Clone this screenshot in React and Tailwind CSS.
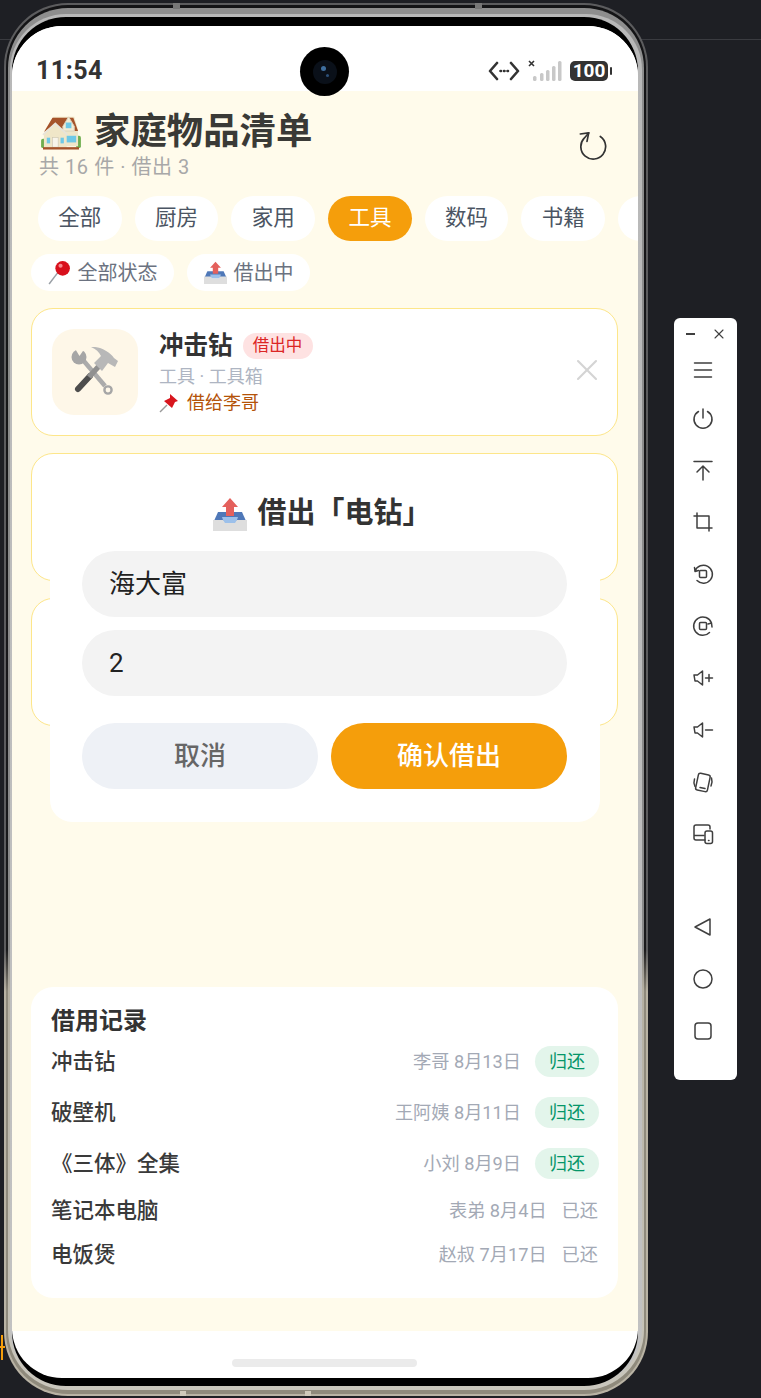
import { X } from "lucide-react";

const tabs = ["全部", "厨房", "家用", "工具", "数码", "书籍", ""];

const records = [
    { name: "冲击钻", meta: "李哥 8月13日", open: true },
    { name: "破壁机", meta: "王阿姨 8月11日", open: true },
    { name: "《三体》全集", meta: "小刘 8月9日", open: true },
    { name: "笔记本电脑", meta: "表弟 8月4日", open: false },
    { name: "电饭煲", meta: "赵叔 7月17日", open: false },
];

const HouseEmoji = ({ className }) => (
    <svg viewBox="0 0 42 38" className={className}>
        <rect x="0" y="26" width="5" height="10" rx="2" fill="#6fae4f" />
        <rect x="37" y="23" width="5" height="13" rx="2" fill="#6fae4f" />
        <path d="M8 12 L13 3 H35 L39 17 V34 H4 V18 Z" fill="#f0e6c8" />
        <path d="M3 19 L12 4 H34 L39 18 H24 L15 10 Z" fill="#a5532a" />
        <path d="M23 13 L29 3 L35 13 V18 H23 Z" fill="#f4ecd4" stroke="#d9d2bd" strokeWidth="1" />
        <rect x="26" y="9" width="6" height="6" fill="#6fc8e6" />
        <path d="M3 21 L15 11 L27 21 V36 H3 Z" fill="#f0e6c8" />
        <path d="M2 22 L15 10 L28 22" fill="none" stroke="#e8e4da" strokeWidth="2" />
        <rect x="12" y="25" width="6" height="10" fill="#f8f4ea" stroke="#c9c3b2" strokeWidth="0.6" />
        <rect x="6" y="25" width="3.5" height="6" fill="#6fc8e6" />
        <rect x="20.5" y="25" width="3.5" height="6" fill="#6fc8e6" />
        <rect x="27" y="23" width="10" height="7" fill="#6fc8e6" />
        <rect x="2" y="35" width="38" height="2.5" fill="#a5532a" />
    </svg>
);

const RoundPinEmoji = ({ className }) => (
    <svg viewBox="0 0 22 24" className={className}>
        <path d="M1 23 L11 10" stroke="#9aa0a6" strokeWidth="1.4" />
        <circle cx="14" cy="8" r="7" fill="#d8101c" />
        <circle cx="12" cy="5.5" r="2" fill="#f78a8f" />
    </svg>
);

const OutboxEmoji = ({ className }) => (
    <svg viewBox="0 0 34 34" className={className}>
        <path d="M5 15 H29 L33 24 H1 Z" fill="#4f78b8" />
        <path d="M9 20 H25 L23 26 H11 Z" fill="#9cc0ea" />
        <path d="M0 23 H10 L12 26 H22 L24 23 H34 V34 H0 Z" fill="#dedede" />
        <path d="M17 1 L25 10 H21 V19 H13 V10 H9 Z" fill="#e4605c" />
    </svg>
);

const ToolsEmoji = ({ className }) => (
    <svg viewBox="0 0 50 50" className={className}>
        {/* wrench */}
        <path d="M13 13 L35 39" stroke="#ababab" strokeWidth="4.500" />
        <circle cx="9" cy="10" r="7.500" fill="#a6a6a6" />
        <path d="M4 0 L9.500 9 L15 1 Z" fill="#fef7e8" />
        <circle cx="38" cy="43" r="3.600" fill="#fef7e8" stroke="#a6a6a6" strokeWidth="2.400" />
        {/* hammer */}
        <path d="M8 42 L20 29" stroke="#4d4d4d" strokeWidth="6" strokeLinecap="round" />
        <path d="M19 30 L30 18" stroke="#909090" strokeWidth="5.500" />
        <path d="M21 0 C30 -1 40 5 44 11 L48 14 L45 20 L38 16 L32 24 L24 16 L31 9 C29 5 26 2 21 0 Z" fill="#b8b8b8" />
    </svg>
);

const PinEmoji = ({ className }) => (
    <svg viewBox="0 0 20 20" className={className}>
        <path d="M1 19 L8 12" stroke="#9a9a9a" strokeWidth="1.5" />
        <path d="M11 1 L19 8 L16 9 L13 15 L5 8 L11 5 Z" fill="#d8161e" />
    </svg>
);

const Glyph = ({ children }) => (
    <svg viewBox="0 0 24 24" className="w-6 h-6" fill="none" stroke="#3f3f3f" strokeWidth="1.5" strokeLinecap="round" strokeLinejoin="round">
        {children}
    </svg>
);

const toolIcons = [
    <path key="a" d="M3.5 5 H20.5 M3.5 12 H20.5 M3.5 19 H20.5" />,
    <path key="b" d="M12 3 V12 M7.5 5.5 A9 9 0 1 0 16.500 5.500" />,
    <path key="c" d="M3 3.500 H21 M12 22 V8 M6 14 L12 8 L18 14" />,
    <path key="d" d="M3 6 H18 V21 M6 3 V18 H21" />,
    <g key="e"><rect x="8.500" y="8.500" width="7" height="7" rx="1" /><path d="M4 9 A9 9 0 1 1 6 18.500 M3.500 5.500 L4 9.500 L7.500 8.500" /></g>,
    <g key="f"><rect x="8.500" y="8.500" width="7" height="7" rx="1" /><path d="M20.500 9 A9.200 9.200 0 1 0 18.500 18.500 M21 13 L20.500 9 L17 10" /></g>,
    <path key="g" d="M3 9 H6.500 L11.500 5 V19 L6.500 15 H4 Z M14.500 12 H21.500 M18 8.500 V15.500" />,
    <path key="h" d="M3 9 H6.500 L11.500 5 V19 L6.500 15 H4 Z M14.500 12 H21.500" />,
    <g key="i"><rect x="6" y="4" width="12" height="17" rx="2" transform="rotate(12 12 12)" /><path d="M9 17.500 L14 18.500 M3.500 9 C2.500 12 2.800 14 4 16.500 M20.500 8 C21.500 11 21.300 13 20 16" /></g>,
    <g key="j"><path d="M14 18 H5 A2 2 0 0 1 3 16 V5 A2 2 0 0 1 5 3 H17 A2 2 0 0 1 19 5 V7 M3 13.500 H13" /><rect x="14" y="9" width="7.500" height="12.500" rx="2" /><path d="M17.500 18.500 H18" /></g>,
];

const navIcons = [
    <path key="a" d="M19 4 V20 L4 12 Z" />,
    <circle key="b" cx="12" cy="12" r="9" />,
    <rect key="c" x="4" y="4" width="16" height="16" rx="3" />,
];

const ToolBar = () => (
    <div className="ml-[26px] mt-[318px] w-[63px] shrink-0 bg-white rounded-md flex flex-col pb-[23px]">
        <div className="w-full h-[25px] flex justify-between items-start pt-[8px] pl-[12px] pr-[10px]">
            <div className="w-[9px] h-[2px] mt-[7px] bg-[#3f3f3f]"></div>
            <X size={16} color="#3f3f3f" strokeWidth={1.6} />
        </div>
        {toolIcons.map((icon, index) => (
            <div key={index} className={`flex items-center justify-center pr-[5px] ${index === 0 ? "h-[49px] pt-[4px]" : "h-[52px]"}`}><Glyph>{icon}</Glyph></div>
        ))}
        <div className="h-[41px]"></div>
        {navIcons.map((icon, index) => (
            <div key={index} className="h-[52px] flex items-center justify-center pr-[5px]"><Glyph>{icon}</Glyph></div>
        ))}
    </div>
);

const StatusBar = () => (
    <div className="relative h-[65px] bg-white shrink-0 flex items-end justify-between pl-[24px] pr-[26px] pb-[5px]">
        <span className="text-[25px] leading-[30px] font-bold tracking-[0.5px] text-[#333]">11:54</span>
        <div className="flex items-center h-[30px]">
            <svg viewBox="0 0 32 20" className="w-[32px] h-[20px]" fill="none" stroke="#333" strokeWidth="2.6" strokeLinecap="round" strokeLinejoin="round">
                <path d="M9 2 L2 10 L9 18 M23 2 L30 10 L23 18" />
                <path d="M12.500 10 H13 M16 10 H16.500 M19.500 10 H20" />
            </svg>
            <svg viewBox="0 0 34 22" className="w-[34px] h-[22px] ml-[8px]">
                <path d="M1 1 L6 6 M6 1 L1 6" stroke="#333" strokeWidth="1.600" />
                <rect x="5" y="16" width="3.500" height="5" rx="1.500" fill="#c8c8c8" />
                <rect x="12" y="13" width="3.500" height="8" rx="1.500" fill="#c8c8c8" />
                <rect x="18" y="10" width="3.500" height="11" rx="1.500" fill="#c8c8c8" />
                <rect x="24" y="6" width="3.500" height="15" rx="1.500" fill="#c8c8c8" />
                <rect x="30" y="1" width="3.500" height="20" rx="1.500" fill="#c8c8c8" />
            </svg>
            <div className="ml-[8px] w-[38px] h-[20px] rounded-[5px] bg-[#333] text-white text-[19px] leading-[20px] font-bold text-center">100</div>
            <div className="ml-[2px] w-[2px] h-[8px] rounded-sm bg-[#333]"></div>
        </div>
        {/* camera hole */}
        <div className="absolute left-[288px] top-[21px] w-[49px] h-[49px] rounded-full bg-black flex items-center justify-center">
            <div className="relative w-[24px] h-[24px] rounded-full bg-[#0a1019]">
                <div className="absolute left-[8px] top-[6px] w-[5px] h-[5px] rounded-full bg-[#3f6f9f]"></div>
                <div className="absolute left-[13px] top-[14px] w-[3px] h-[3px] rounded-full bg-[#2c5078]"></div>
            </div>
        </div>
    </div>
);

const Tabs = () => (
    <div className="flex gap-[13px] pl-[26px] mt-[16px] overflow-hidden">
        {tabs.map((tab, index) => (
            <div
                key={index}
                className={`w-[83.7px] h-[45px] shrink-0 rounded-[23px] flex items-center justify-center text-[21.5px] ${tab === "工具" ? "bg-[#f59e0b] text-white" : "bg-white text-[#4b5563]"}`}
            >
                {tab}
            </div>
        ))}
    </div>
);

const ItemCard = () => (
    <div className="h-[128px] bg-white border border-[#fde68a] rounded-[22px] flex items-center pl-[20px] pr-[12px]">
        <div className="w-[86px] h-[86px] shrink-0 rounded-[22px] bg-[#fef7e8] flex items-center justify-center">
            <ToolsEmoji className="w-[50px] h-[50px]" />
        </div>
        <div className="ml-[21px] flex-1 flex flex-col">
            <div className="flex items-center h-[30px] mt-[2px]">
                <span className="text-[24.5px] leading-[30px] font-bold text-[#333]">冲击钻</span>
                <span className="ml-[10px] w-[70px] h-[26px] rounded-[13px] bg-[#fee2e2] text-[#dc2626] text-[16.5px] leading-[26px] text-center">借出中</span>
            </div>
            <div className="mt-[3px] text-[18px] leading-[26px] text-[#aeb5c2]">工具 · 工具箱</div>
            <div className="flex items-center text-[18px] leading-[26px] text-[#b45309]">
                <PinEmoji className="w-[20px] h-[20px]" />
                <span className="ml-[8px]">借给李哥</span>
            </div>
        </div>
        <div className="mb-[4px]">
            <X size={36} color="#d4d4d4" strokeWidth={1.4} />
        </div>
    </div>
);

const BorrowDialog = () => (
    <div className="absolute left-[38px] top-[446px] w-[550px] h-[350px] bg-white rounded-[22px] pl-[32px] pr-[33px] flex flex-col">
        <div className="h-[79px] flex items-center justify-center text-[29px] font-bold text-[#333] pt-[4px] pr-[4px]">
            <OutboxEmoji className="w-[34px] h-[34px] mr-[10px]" />
            <span>借出「电钻」</span>
        </div>
        <input defaultValue="海大富" className="w-full h-[66px] rounded-[33px] bg-[#f3f3f3] pl-[27px] pb-[5px] text-[26px] text-[#222] outline-none" />
        <input defaultValue="2" className="w-full h-[66px] mt-[13px] rounded-[33px] bg-[#f3f3f3] pl-[27px] text-[26px] text-[#222] outline-none" />
        <div className="flex gap-[13px] mt-[27px]">
            <button className="flex-1 h-[66px] rounded-[33px] bg-[#eef1f6] text-[26px] font-medium text-[#666]">取消</button>
            <button className="flex-1 h-[66px] rounded-[33px] bg-[#f59e0b] text-[26px] font-medium text-white">确认借出</button>
        </div>
    </div>
);

const RecordList = () => (
    <div className="ml-[19px] mr-[20px] h-[311px] shrink-0 bg-white rounded-[22px] pl-[20px] pr-[19px] pt-[19px]">
        <div className="text-[24px] leading-[30px] font-bold text-[#333]">借用记录</div>
        {records.map((record) => (
            <div key={record.name} className="flex items-center justify-between py-[10px]">
                <span className="text-[21.5px] leading-[24px] font-medium text-[#3a3a3a]">{record.name}</span>
                <div className="flex items-center">
                    <span className="text-[18.2px] leading-[24px] text-[#a3a9b5]">{record.meta}</span>
                    {record.open ? (
                        <span className="ml-[14px] w-[64px] h-[31px] rounded-[16px] bg-[#e3f5eb] text-[#059669] text-[18px] leading-[31px] text-center">归还</span>
                    ) : (
                        <span className="ml-[15px] mr-px text-[18.2px] leading-[24px] text-[#a3a9b5]">已还</span>
                    )}
                </div>
            </div>
        ))}
    </div>
);

const Screen = () => (
    <div className="relative w-[626px] h-[1352px] rounded-[50px] overflow-hidden bg-white flex flex-col">
        <StatusBar />
        <div className="h-[1240px] bg-[#fffbeb] flex flex-col">
            <div className="flex justify-between pl-[27px] pr-[31px] pt-[19px]">
                <div>
                    <div className="flex items-center h-[44px]">
                        <HouseEmoji className="ml-[2px] w-[40px] h-[36px]" />
                        <span className="ml-[13px] text-[36.4px] leading-[44px] font-bold text-[#3a3a36]">家庭物品清单</span>
                    </div>
                    <div className="text-[20px] leading-[26px] tracking-[0.55px] text-[#a8a8a8]">共 16 件 · 借出 3</div>
                </div>
                <svg viewBox="0 0 28 28" className="w-[28px] h-[28px] mt-[22px]" fill="none" stroke="#333" strokeWidth="1.700" strokeLinecap="round" strokeLinejoin="round">
                    <path d="M21.300 4.500 A12.400 12.400 0 1 1 5.200 6.200 L9.700 1" />
                    <path d="M1.300 2 L9.700 0.800 L8 9.300" />
                </svg>
            </div>
            <Tabs />
            <div className="flex gap-[13px] pl-[19px] mt-[13px]">
                <div className="h-[37px] w-[143px] rounded-[19px] bg-white flex items-center justify-center text-[20px] text-[#6b7280]">
                    <RoundPinEmoji className="w-[23px] h-[25px] mr-[7px]" />
                    <span>全部状态</span>
                </div>
                <div className="h-[37px] w-[123px] rounded-[19px] bg-white flex items-center justify-center text-[20px] text-[#6b7280]">
                    <OutboxEmoji className="w-[23px] h-[23px] mr-[7px]" />
                    <span>借出中</span>
                </div>
            </div>
            <div className="flex-1 pl-[19px] pr-[20px] pt-[17px] flex flex-col gap-[17px]">
                <ItemCard />
                <div className="h-[128px] bg-white border border-[#fde68a] rounded-[22px]"></div>
                <div className="h-[128px] bg-white border border-[#fde68a] rounded-[22px]"></div>
            </div>
            <RecordList />
            <div className="h-[33px] shrink-0"></div>
        </div>
        <div className="flex-1 flex justify-center pt-[28px]">
            <div className="w-[185px] h-[8px] -ml-[2px] rounded-full bg-[#ebebeb]"></div>
        </div>
        <BorrowDialog />
    </div>
);

const Phone = () => (
    <div className="relative ml-[4px] mt-[3px] w-[644px] h-[1393px] shrink-0 rounded-[64px] p-[2px] bg-[linear-gradient(to_bottom,#5c5c5e_0%,#5c5c5e_68%,#b9b3a4_71%,#b9b3a4_100%)]">
        <div className="w-full h-full rounded-[62px] pt-[3px] pb-[4px] px-[2px] bg-[linear-gradient(to_bottom,#141416_0%,#1a1a1c_68%,#8f8a7c_71%,#8f8a7c_100%)]">
            <div className="w-full h-full rounded-[60px] pt-[6px] pb-[5px] pl-[2px] pr-[2px] bg-[linear-gradient(to_bottom,#8e8e8e_0%,#8a8a8a_68%,#b5b0a2_71%,#c9c6bc_100%)]">
                <div className="w-full h-full rounded-[56px] pl-[2px] pr-[2px] pt-[3px] pb-[3px] bg-[linear-gradient(to_bottom,#b8b8b8_0%,#c2c2c2_100%)]">
                    <div className="w-[626px] h-[1369px] rounded-[54px] pt-[9px] pb-[8px] bg-black">
                        <Screen />
                    </div>
                </div>
            </div>
        </div>
        {/* antenna bands on the frame */}
        <div className="absolute left-[169px] top-0 w-[7px] h-[6px] bg-[#777]"></div>
        <div className="absolute left-[471px] top-0 w-[7px] h-[6px] bg-[#777]"></div>
        <div className="absolute left-[176px] bottom-0 w-[6px] h-[5px] bg-[#cfc9ba]"></div>
        <div className="absolute left-[301px] bottom-0 w-[6px] h-[5px] bg-[#cfc9ba]"></div>
    </div>
);

const App = () => (
    <div className="relative w-[761px] h-[1398px] overflow-hidden bg-[#1e1f24] flex items-start [font-family:Roboto,'Noto_Sans_CJK_SC',sans-serif]">
        <div className="absolute left-0 right-0 top-[39px] h-px bg-[#3a3b40]"></div>
        {/* bit of an orange window behind the phone */}
        <div className="absolute left-[1px] top-[1335px] w-[2px] h-[25px] bg-[#f59e0b]"></div>
        <div className="absolute left-0 top-[1346px] w-[5px] h-[2px] bg-[#f59e0b]"></div>
        <Phone />
        <ToolBar />
    </div>
);

export default App;
